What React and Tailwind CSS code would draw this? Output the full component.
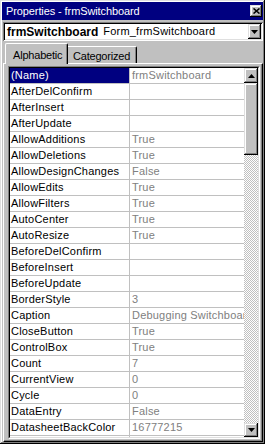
const rows = [
  ["(Name)", "frmSwitchboard"],
  ["AfterDelConfirm", ""],
  ["AfterInsert", ""],
  ["AfterUpdate", ""],
  ["AllowAdditions", "True"],
  ["AllowDeletions", "True"],
  ["AllowDesignChanges", "False"],
  ["AllowEdits", "True"],
  ["AllowFilters", "True"],
  ["AutoCenter", "True"],
  ["AutoResize", "True"],
  ["BeforeDelConfirm", ""],
  ["BeforeInsert", ""],
  ["BeforeUpdate", ""],
  ["BorderStyle", "3"],
  ["Caption", "Debugging Switchboard"],
  ["CloseButton", "True"],
  ["ControlBox", "True"],
  ["Count", "7"],
  ["CurrentView", "0"],
  ["Cycle", "0"],
  ["DataEntry", "False"],
  ["DatasheetBackColor", "16777215"],
  ["", ""],
]

const raised =
  "bg-[#c0c0c0] shadow-[inset_-1px_-1px_#000,inset_1px_1px_#dfdfdf,inset_-2px_-2px_#808080,inset_2px_2px_#fff]"

function Arrow({ up }) {
  return (
    <svg width="7" height="4" viewBox="0 0 7 4">
      <polygon points={up ? "3.5,0 7,4 0,4" : "0,0 7,0 3.5,4"} fill="#000" />
    </svg>
  )
}

export default function App() {
  return (
    <div className="w-[265px] h-[444px] bg-[#c0c0c0] p-[2px] flex flex-col font-['Liberation_Sans',Arial,sans-serif] text-[11px] shadow-[inset_-1px_-1px_#000,inset_1px_1px_#dfdfdf,inset_-2px_-2px_#808080,inset_2px_2px_#fff]">
      {/* title bar */}
      <div className="h-[18px] bg-[#000080] flex items-center justify-between pl-[4px] pr-[1px] text-white">
        <span className="leading-none tracking-[-0.1px]">Properties - frmSwitchboard</span>
        <div className={`w-[12px] h-[12px] flex items-center justify-center ${raised}`}>
          <svg width="7" height="6" viewBox="0 0 7 6">
            <path d="M0.5 0.5 L6.5 5.5 M6.5 0.5 L0.5 5.5" stroke="#000" strokeWidth="1.6" />
          </svg>
        </div>
      </div>

      {/* object combo */}
      <div className="mt-[2px] ml-[1px] h-[19px] bg-white flex items-center shadow-[inset_1px_1px_#808080,inset_-1px_-1px_#fff,inset_2px_2px_#000,inset_-2px_-2px_#dfdfdf] pl-[4px] pr-[2px]">
        <span className="font-bold text-[12px]">frmSwitchboard</span>
        <span className="ml-[5px] flex-1 tracking-[0.2px]">Form_frmSwitchboard</span>
        <div className={`w-[13px] h-[15px] flex items-center justify-center ${raised}`}>
          <Arrow />
        </div>
      </div>

      {/* tabs */}
      <div className="mt-[2px] h-[20px] pl-[3px] flex items-end relative z-10 tracking-[-0.2px]">
        <div className="w-[63px] h-[21px] -mb-[1px] bg-[#c0c0c0] border-t border-l border-white rounded-tl-[2px] rounded-tr-[2px] border-r border-r-black pl-[7px] pt-[3px] shadow-[inset_-1px_0_#808080]">
          Alphabetic
        </div>
        <div className="w-[69px] h-[17px] bg-[#c0c0c0] border-t border-white rounded-tr-[2px] border-r border-r-black pl-[5px] pt-[1px] shadow-[inset_-1px_0_#808080]">
          Categorized
        </div>
      </div>

      {/* panel */}
      <div className="flex-1 ml-[1px] flex flex-col border-t border-l border-white border-r border-b border-r-black border-b-black shadow-[inset_-1px_-1px_#808080] pl-[4px] pr-[2px] pt-[2px] pb-[2px] min-h-0">
        <div className="flex-1 min-h-0 flex border border-t-[#808080] border-l-[#808080] border-r-white border-b-white">
          <div className="flex-1 min-w-0 flex border border-t-black border-l-black border-r-[#dfdfdf] border-b-[#dfdfdf] bg-white">
            {/* property rows */}
            <div className="flex-1 min-w-0 overflow-hidden tracking-[0.2px]">
              {rows.map(([name, value], i) => (
                <div key={i} className="h-[16px] flex border-b border-[#c0c0c0] leading-[15px]">
                  <div
                    className={`w-[120px] shrink-0 pl-[1px] border-r border-[#c0c0c0] whitespace-nowrap overflow-hidden ${
                      i === 0 ? "bg-[#000080] text-white" : "text-black"
                    }`}
                  >
                    {name}
                  </div>
                  <div className="flex-1 pl-[2px] text-[#808080] whitespace-nowrap overflow-hidden">
                    {value}
                  </div>
                </div>
              ))}
            </div>

            {/* scrollbar */}
            <div className="w-[14px] shrink-0 flex flex-col">
              <div className={`h-[15px] flex items-center justify-center ${raised}`}>
                <Arrow up />
              </div>
              <div className={`h-[72px] ${raised}`} />
              <div className="flex-1 bg-[repeating-conic-gradient(#c0c0c0_0%_25%,#ffffff_0%_50%)] bg-[length:2px_2px]" />
              <div className={`h-[14px] flex items-center justify-center ${raised}`}>
                <Arrow />
              </div>
            </div>
          </div>
        </div>
      </div>
    </div>
  )
}
